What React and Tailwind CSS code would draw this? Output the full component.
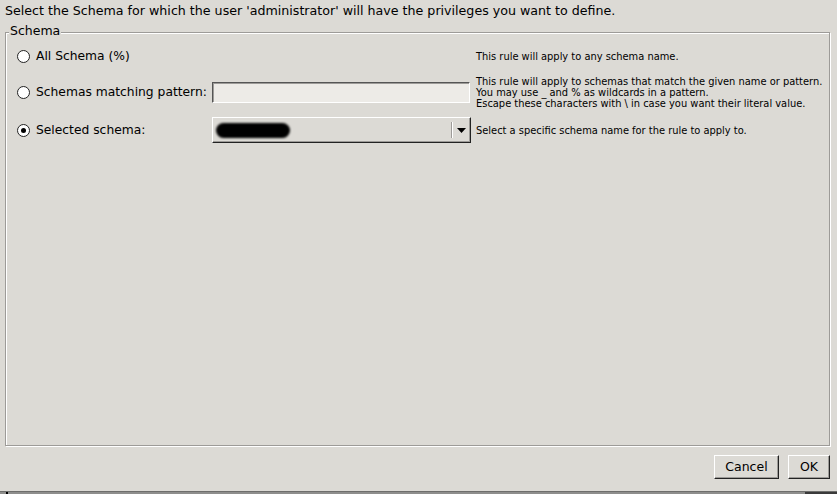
import React from 'react';

const Radio = ({ checked }) => (
  <span className="w-[13px] h-[13px] rounded-full border border-[#222] bg-white flex items-center justify-center shrink-0">
    {checked && <span className="w-[5px] h-[5px] rounded-full bg-black" />}
  </span>
);

const Row = ({ checked, label, height, children, desc }) => (
  <div className="flex items-center" style={{ height }}>
    <div className="w-[195px] flex items-center gap-[6px] shrink-0">
      <Radio checked={checked} />
      <span className="text-[12.3px] leading-[16px]">{label}</span>
    </div>
    <div className="w-[259px] shrink-0 flex items-center">{children}</div>
    <div className="ml-[5px] text-[9.9px] leading-[11px] whitespace-pre">{desc}</div>
  </div>
);

const App = () => {
  return (
    <div
      className="w-[837px] h-[494px] bg-[#dcdad5] text-black flex flex-col overflow-hidden"
      style={{ fontFamily: '"DejaVu Sans", "Liberation Sans", sans-serif' }}
    >
      {/* header text */}
      <div className="h-[32px] pl-[5px] pt-[3px] text-[12.65px] leading-[16px] shrink-0">
        Select the Schema for which the user 'administrator' will have the privileges you want to define.
      </div>

      {/* Schema group */}
      <div className="relative ml-[5px] w-[825px] h-[414px] border border-[#9d9b98] shadow-[1px_1px_0_#ffffff,inset_1px_1px_0_#ffffff] shrink-0">
        <span className="absolute left-[3px] top-[-10px] px-[1px] bg-[#dcdad5] text-[12.5px] leading-[16px]">
          Schema
        </span>

        <div className="pl-[11px] pt-[11px] flex flex-col">
          <Row label="All Schema (%)" height={24} desc="This rule will apply to any schema name." />

          <div className="mt-[6px]">
            <Row
              label="Schemas matching pattern:"
              height={36}
              desc={
                'This rule will apply to schemas that match the given name or pattern.\nYou may use _ and % as wildcards in a pattern.\nEscape these characters with \\ in case you want their literal value.'
              }
            >
              <div className="w-[258px] h-[21px] bg-[#edebe7] border border-t-[#555] border-l-[#555] border-r-white border-b-white shadow-[inset_1px_1px_0_#9d9b98]" />
            </Row>
          </div>

          <div className="mt-[7px]">
            <Row checked label="Selected schema:" height={26} desc="Select a specific schema name for the rule to apply to.">
              <div className="w-[259px] h-[26px] flex border border-t-white border-l-white border-r-[#222] border-b-[#222] shadow-[inset_-1px_-1px_0_#9d9b98]">
                <div className="flex-1 flex items-center pl-[3px]">
                  <div className="w-[74px] h-[15px] rounded-full bg-black blur-[1px]" />
                </div>
                <div className="w-[19px] flex items-center justify-center border-l border-l-[#9d9b98] shadow-[inset_1px_0_0_#ffffff] my-[4px]">
                  <svg width="9" height="5" viewBox="0 0 9 5">
                    <path d="M0 0 H9 L4.5 5 Z" fill="#000" />
                  </svg>
                </div>
              </div>
            </Row>
          </div>
        </div>
      </div>

      {/* buttons */}
      <div className="mt-[9px] h-[24px] flex justify-end gap-[9px] pr-[7px] shrink-0">
        <button className="w-[65px] h-[24px] text-[12.5px] bg-[#dcdad5] border border-t-white border-l-white border-r-[#222] border-b-[#222] shadow-[inset_-1px_-1px_0_#9d9b98]">
          Cancel
        </button>
        <button className="w-[42px] h-[24px] text-[12.5px] bg-[#dcdad5] border border-t-white border-l-white border-r-[#222] border-b-[#222] shadow-[inset_-1px_-1px_0_#9d9b98]">
          OK
        </button>
      </div>

      {/* window bottom edge */}
      <div className="mt-auto h-[3px] flex bg-[#8e8e8c] border-t border-t-[#6e6e6c] shrink-0">
        <div className="ml-[6px] w-[2px] bg-black" />
        <div className="ml-auto w-[32px] bg-[#3a3a3a]" />
      </div>
    </div>
  );
};

export default App;
